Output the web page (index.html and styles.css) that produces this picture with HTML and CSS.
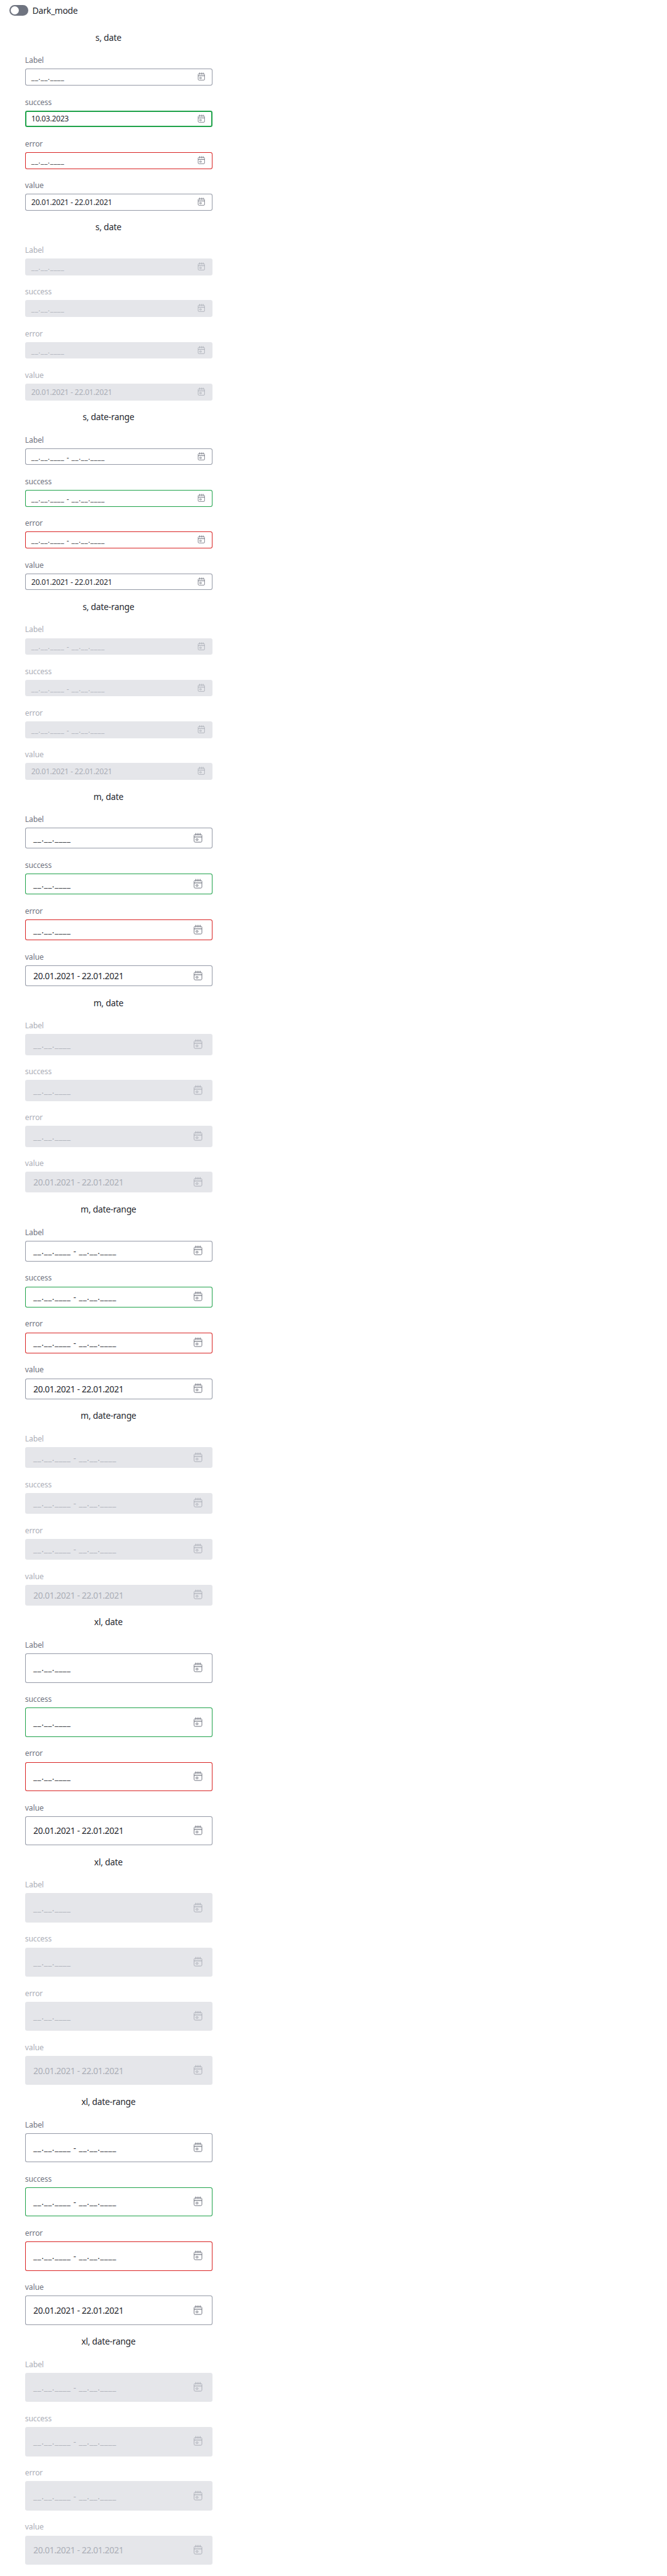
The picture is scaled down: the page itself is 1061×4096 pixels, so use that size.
FILE: index.html
```html
<!DOCTYPE html>
<html lang="en">
<head>
<meta charset="utf-8">
<title>Date fields</title>
<link rel="stylesheet" href="styles.css">
</head>
<body>
<label class="switch"><span class="switch-track"><span class="switch-thumb"></span></span><span class="switch-text">Dark_mode</span></label>
<main class="stories" id="stories"></main>
<svg class="sprite" aria-hidden="true">
<symbol id="calendar" viewBox="0 0 24 24">
<g fill="none" stroke="currentColor" stroke-width="1.2">
<rect x="4.6" y="4.6" width="14.8" height="14.8" rx="2"/>
<path d="M8 2v5M12 2v5M16 2v5"/>
<path d="M4.5 9.5h15" stroke-width="1.4"/>
<rect x="8.2" y="13.1" width="3.8" height="2.8" rx=".6"/>
</g>
</symbol>
</svg>
<script src="fields.js"></script>
</body>
</html>
```
FILE: styles.css
```css
html { font-size: 8.2915px; background: #fff; }
body { margin: 0; font-family: "Noto Sans", sans-serif; color: #24262d; overflow: hidden; }
.sprite { display: none; }
.switch { display: flex; align-items: center; gap: .8rem; height: 2.4rem; padding: .8rem 1.8rem 0; }
.switch-track { display: flex; align-items: center; width: 3.6rem; height: 2rem; padding-left: .2rem; border-radius: 1rem; background: #6f7480; box-sizing: border-box; }
.switch-thumb { width: 1.6rem; height: 1.6rem; border-radius: 50%; background: #fff; }
.switch-text { font-size: 1.66rem; line-height: 2.4rem; letter-spacing: -.018em; }
.stories { width: 36rem; padding: 2.8rem 0 2rem 4.8rem; display: flex; flex-direction: column; gap: 2rem; }
.story { display: flex; flex-direction: column; gap: 2rem; }
.title { margin: 0 4rem 0 0; height: 2.4rem; text-align: center; font-size: 1.66rem; font-weight: 400; line-height: 2.5rem; letter-spacing: -.016em; }
.field { display: flex; flex-direction: column; gap: .4rem; }
.label { height: 2.4rem; font-size: 1.46rem; line-height: 2.3rem; letter-spacing: -.012em; color: #70747f; }
.box { display: flex; align-items: center; justify-content: space-between; box-sizing: border-box; height: 4rem; padding: 0 1.6rem; border-radius: .4rem; box-shadow: inset 0 0 0 1px #959aa7; font-size: 1.66rem; white-space: pre; }
.text { letter-spacing: -.028em; }
.text.mask { font-size: 1.6rem; letter-spacing: .041em; }
.icon { width: 2.4rem; height: 2.4rem; color: #70747f; }
.s .box { height: 3.2rem; padding: 0 1.2rem; font-size: 1.46rem; }
.s .text { letter-spacing: -.019em; }
.s .text.mask { font-size: 1.4rem; letter-spacing: .046em; }
.s .icon { width: 2rem; height: 2rem; }
.xl .box { height: 5.6rem; }
.success .box { box-shadow: inset 0 0 0 1px #1fa24a; }
.success.focused .box { box-shadow: inset 0 0 0 2px #1fa24a; }
.error .box { box-shadow: inset 0 0 0 1px #d92424; }
.disabled .box { box-shadow: none; background: #e5e6ea; color: #abaeb7; }
.disabled .label, .disabled .icon { color: #abaeb7; }
```
FILE: fields.js
```js
const blank = "__.__.____";
const value = "20.01.2021 - 22.01.2021";
const stories = document.getElementById("stories");
let first = true;
for (const size of ["s", "m", "xl"]) {
  for (const type of ["date", "date-range"]) {
    for (const state of ["", "disabled"]) {
      const empty = type === "date" ? blank : blank + " - " + blank;
      const fields = [["Label", "", empty], ["success", first ? "success focused" : "success", first ? "10.03.2023" : empty], ["error", "error", empty], ["value", "", value]];
      first = false;
      stories.insertAdjacentHTML("beforeend", `<section class="story ${size} ${state}"><h2 class="title">${size}, ${type}</h2>` +
        fields.map(([label, status, text]) => `<div class="field ${status}"><span class="label">${label}</span><div class="box"><span class="text ${text[0] === "_" ? "mask" : ""}">${text}</span><svg class="icon"><use href="#calendar"/></svg></div></div>`).join("") +
        `</section>`);
    }
  }
}
```
